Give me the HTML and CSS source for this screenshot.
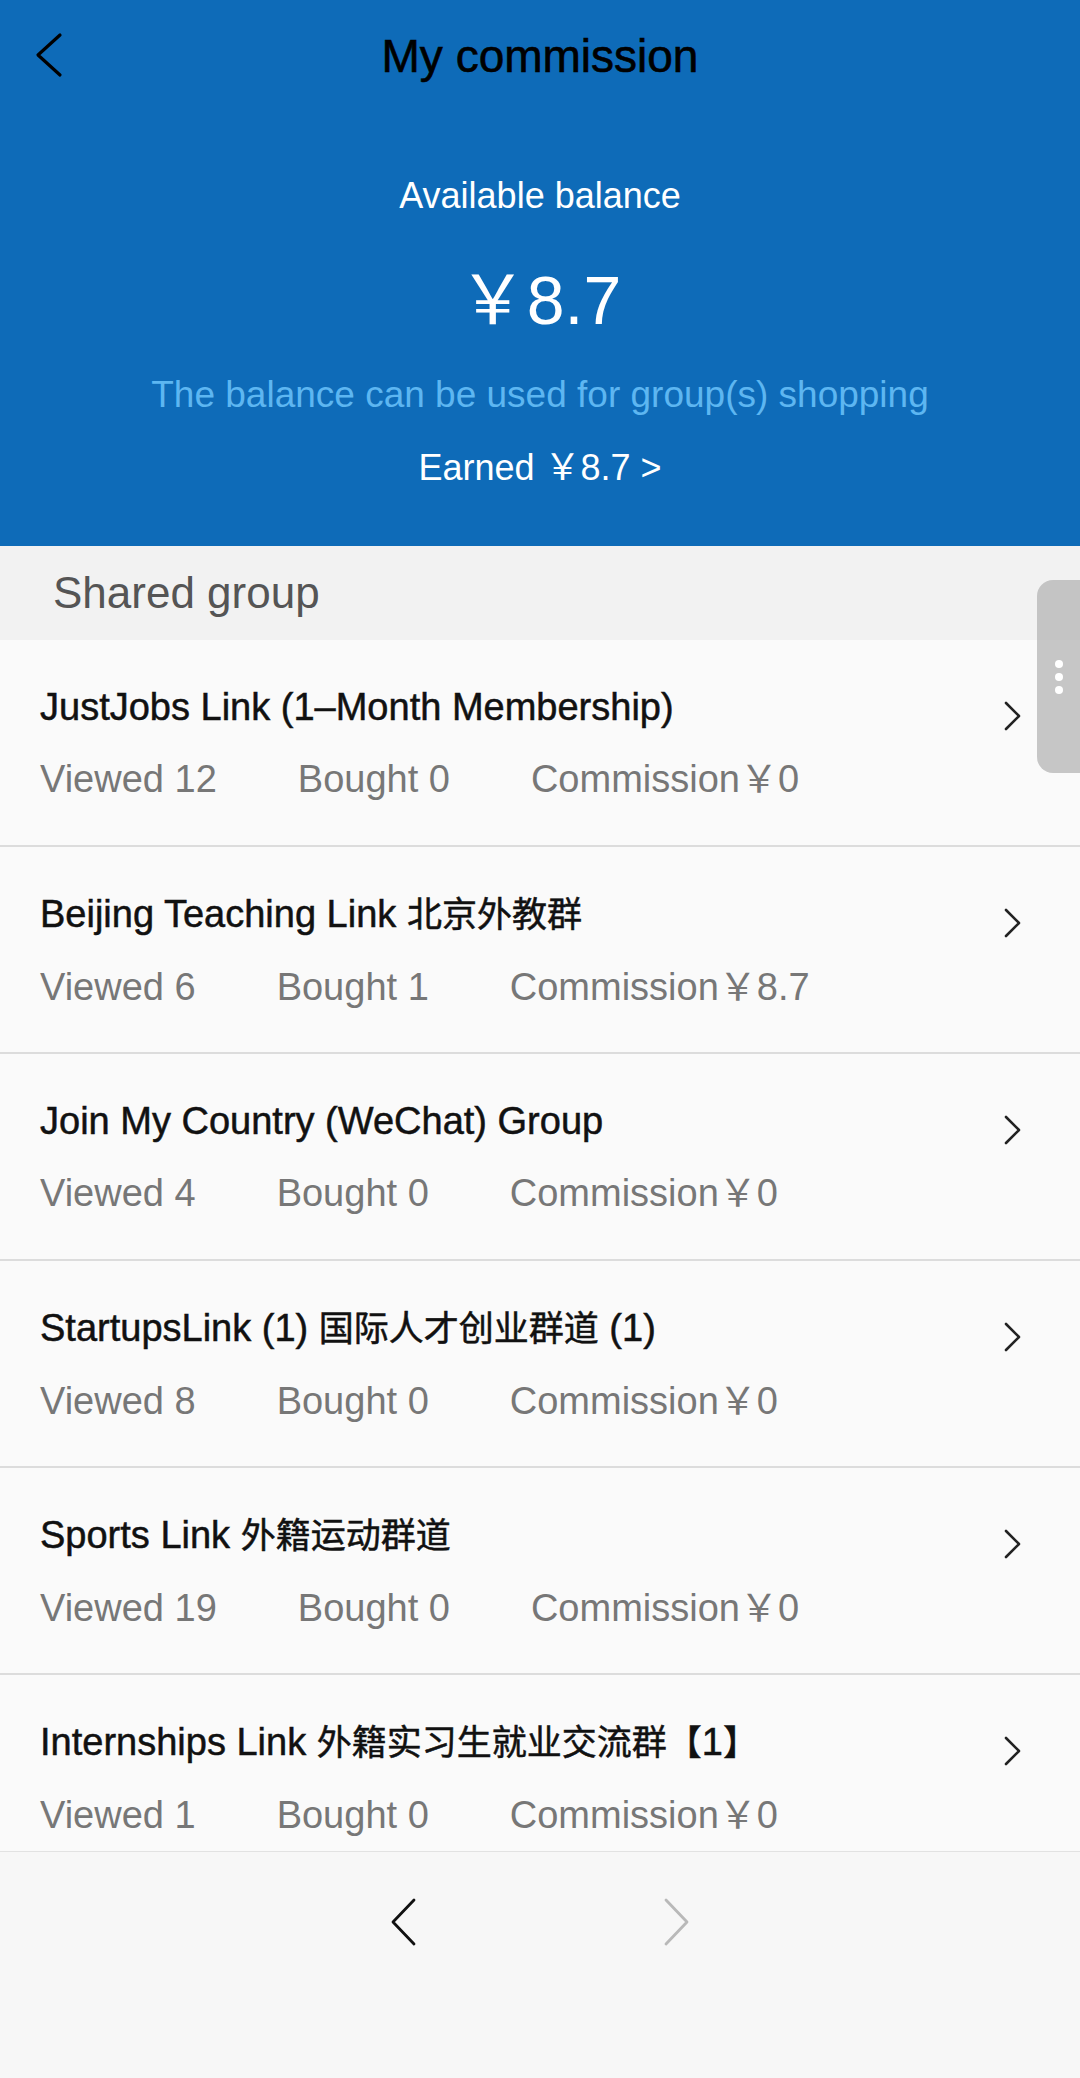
FILE: index.html
```html
<!DOCTYPE html>
<html lang="en">
  <head>
    <meta charset="UTF-8" />
    <meta name="viewport" content="width=device-width, initial-scale=1.0" />
    <title>My commission</title>
    <link rel="stylesheet" href="styles.css">
  </head>
  <body>
    <div class="page">
      <div class="header">
        <div class="topbar">
          <div class="back">
            <svg width="30" height="48" viewBox="0 0 30 48">
              <polyline points="25,3 3,23 25,43" fill="none" stroke="#000" stroke-width="3.2" stroke-linecap="round" stroke-linejoin="round" />
            </svg>
          </div>
          <h1>My commission</h1>
          <div></div>
        </div>
        <div class="balance">
          <div class="balance-label">Available balance</div>
          <div class="balance-amount">￥8.7</div>
          <div class="balance-note">The balance can be used for group(s) shopping</div>
          <div class="balance-earned">Earned ￥8.7 &gt;</div>
        </div>
      </div>

      <div class="section-title">Shared group</div>

      <div class="list">
        <div class="item">
          <div class="item-body">
            <div class="item-title">JustJobs Link (1–Month Membership)</div>
            <div class="item-stats">
              <span>Viewed 12</span><span>Bought 0</span><span>Commission￥0</span>
            </div>
          </div>
          <svg class="arrow" width="22" height="32" viewBox="0 0 22 32">
            <polyline points="4,3 17,16 4,29" fill="none" stroke="#222" stroke-width="2.6" stroke-linecap="round" stroke-linejoin="round" />
          </svg>
        </div>
        <div class="item">
          <div class="item-body">
            <div class="item-title">Beijing Teaching Link <span class="cn">北京外教群</span></div>
            <div class="item-stats">
              <span>Viewed 6</span><span>Bought 1</span><span>Commission￥8.7</span>
            </div>
          </div>
          <svg class="arrow" width="22" height="32" viewBox="0 0 22 32">
            <polyline points="4,3 17,16 4,29" fill="none" stroke="#222" stroke-width="2.6" stroke-linecap="round" stroke-linejoin="round" />
          </svg>
        </div>
        <div class="item">
          <div class="item-body">
            <div class="item-title">Join My Country (WeChat) Group</div>
            <div class="item-stats">
              <span>Viewed 4</span><span>Bought 0</span><span>Commission￥0</span>
            </div>
          </div>
          <svg class="arrow" width="22" height="32" viewBox="0 0 22 32">
            <polyline points="4,3 17,16 4,29" fill="none" stroke="#222" stroke-width="2.6" stroke-linecap="round" stroke-linejoin="round" />
          </svg>
        </div>
        <div class="item">
          <div class="item-body">
            <div class="item-title">StartupsLink (1) <span class="cn">国际人才创业群道</span> (1)</div>
            <div class="item-stats">
              <span>Viewed 8</span><span>Bought 0</span><span>Commission￥0</span>
            </div>
          </div>
          <svg class="arrow" width="22" height="32" viewBox="0 0 22 32">
            <polyline points="4,3 17,16 4,29" fill="none" stroke="#222" stroke-width="2.6" stroke-linecap="round" stroke-linejoin="round" />
          </svg>
        </div>
        <div class="item">
          <div class="item-body">
            <div class="item-title">Sports Link <span class="cn">外籍运动群道</span></div>
            <div class="item-stats">
              <span>Viewed 19</span><span>Bought 0</span><span>Commission￥0</span>
            </div>
          </div>
          <svg class="arrow" width="22" height="32" viewBox="0 0 22 32">
            <polyline points="4,3 17,16 4,29" fill="none" stroke="#222" stroke-width="2.6" stroke-linecap="round" stroke-linejoin="round" />
          </svg>
        </div>
        <div class="item">
          <div class="item-body">
            <div class="item-title">Internships Link <span class="cn">外籍实习生就业交流群【</span>1<span class="cn">】</span></div>
            <div class="item-stats">
              <span>Viewed 1</span><span>Bought 0</span><span>Commission￥0</span>
            </div>
          </div>
          <svg class="arrow" width="22" height="32" viewBox="0 0 22 32">
            <polyline points="4,3 17,16 4,29" fill="none" stroke="#222" stroke-width="2.6" stroke-linecap="round" stroke-linejoin="round" />
          </svg>
        </div>
      </div>

      <div class="pager">
        <svg width="30" height="50" viewBox="0 0 30 50">
          <polyline points="26,3 5,25 26,47" fill="none" stroke="#111" stroke-width="2.8" stroke-linecap="round" stroke-linejoin="round" />
        </svg>
        <svg width="30" height="50" viewBox="0 0 30 50">
          <polyline points="4,3 25,25 4,47" fill="none" stroke="#b9b9b9" stroke-width="2.8" stroke-linecap="round" stroke-linejoin="round" />
        </svg>
      </div>

      <div class="handle">
        <span></span><span></span><span></span>
      </div>
    </div>
  </body>
</html>
```

FILE: styles.css
```css
body {
  margin: 0;
  padding: 0;
  font-family: "Liberation Sans", Arial, "Noto Sans CJK SC", sans-serif;
  background: #f7f7f7;
}
.page {
  position: relative;
  width: 1080px;
  height: 2078px;
  overflow: hidden;
  display: flex;
  flex-direction: column;
}
.header {
  background: #0e6bb8;
  height: 546px;
  color: #fff;
}
.topbar {
  display: grid;
  grid-template-columns: 1fr auto 1fr;
  align-items: center;
  height: 112px;
}
.back {
  padding-left: 35px;
  padding-top: 4px;
}
.topbar h1 {
  margin: 0;
  font-size: 46px;
  font-weight: normal;
  color: #000;
  -webkit-text-stroke: 0.6px #000;
}
.balance {
  text-align: center;
}
.balance-label {
  margin-top: 59px;
  font-size: 36px;
  line-height: 50px;
}
.balance-amount {
  margin-top: 39px;
  font-size: 68px;
  line-height: 80px;
}
.balance-note {
  margin-top: 30px;
  font-size: 37px;
  line-height: 50px;
  color: #5db6f1;
}
.balance-earned {
  margin-top: 23px;
  font-size: 36px;
  line-height: 50px;
}
.section-title {
  height: 94px;
  line-height: 94px;
  padding-left: 53px;
  background: #f2f2f2;
  font-size: 44px;
  color: #555;
}
.list {
  height: 1211px;
  overflow: hidden;
  background: #fafafa;
}
.item {
  display: flex;
  align-items: flex-start;
  height: 205px;
  padding: 0 56px 0 40px;
  border-bottom: 2px solid #dcdcdc;
}
.item-body {
  flex: 1;
  padding-top: 42px;
}
.item-title {
  font-size: 38px;
  line-height: 50px;
  color: #111;
  -webkit-text-stroke: 0.5px #111;
  white-space: nowrap;
}
.item-title .cn {
  font-size: 35px;
}
.item-stats {
  display: flex;
  gap: 81px;
  margin-top: 22px;
  font-size: 38px;
  line-height: 50px;
  color: #777;
}
.arrow {
  margin-top: 60px;
}
.pager {
  flex: 1;
  display: flex;
  justify-content: center;
  gap: 244px;
  padding-top: 45px;
  border-top: 1px solid #e2e2e2;
  background: #f7f7f7;
}
.handle {
  position: absolute;
  top: 580px;
  right: 0;
  width: 43px;
  height: 193px;
  border-radius: 16px 0 0 16px;
  background: rgba(180, 180, 180, 0.75);
  display: flex;
  flex-direction: column;
  align-items: center;
  justify-content: center;
  gap: 5px;
}
.handle span {
  width: 8px;
  height: 8px;
  border-radius: 50%;
  background: #fff;
}
```
